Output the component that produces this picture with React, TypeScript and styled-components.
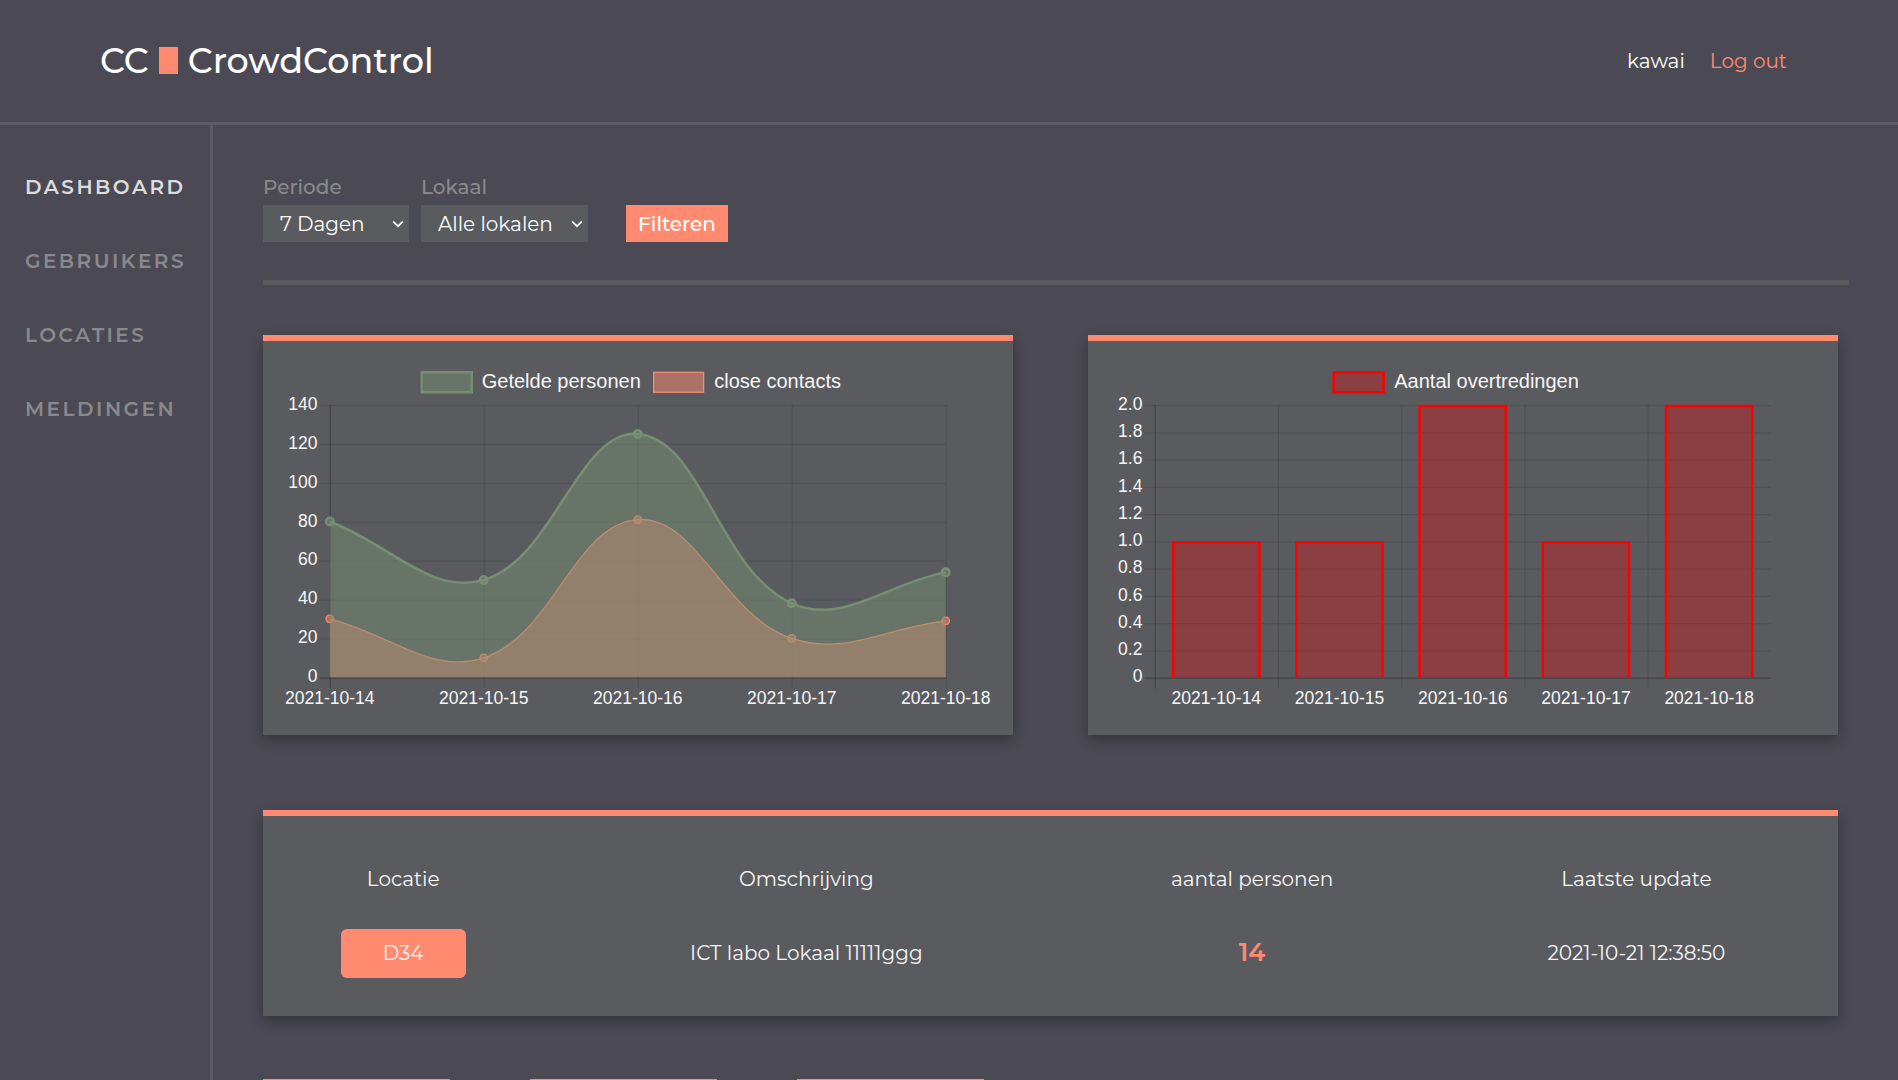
import React from "react";
import styled, { createGlobalStyle } from "styled-components";

const color = {
  page: "#4b4a54",
  panel: "#5a5b5f",
  line: "#5c5c66",
  accent: "#ff8a70",
  muted: "#89898d",
  text: "#ffffff",
};

const GlobalStyle = createGlobalStyle`
  *, *::before, *::after { box-sizing: border-box; }
  body {
    margin: 0;
    background: ${color.page};
    color: ${color.text};
    font: 400 20px/24px Montserrat, Inter, sans-serif;
  }
`;

const Shell = styled.div`
  display: flex;
  flex-direction: column;
  height: 100vh;
  overflow: hidden;
`;

const Header = styled.header`
  display: flex;
  align-items: center;
  justify-content: space-between;
  flex: none;
  height: 125px;
  padding: 0 111px 0 100px;
  border-bottom: 3px solid ${color.line};
`;

const Logo = styled.a`
  display: flex;
  align-items: center;
  gap: 10px;
  color: inherit;
  font-size: 35px;
  font-weight: 500;
  line-height: 44px;
  text-decoration: none;
`;

const LogoMark = styled.span`
  width: 19px;
  height: 27px;
  margin-bottom: 2px;
  background: ${color.accent};
`;

const Account = styled.div`
  display: flex;
  gap: 25px;
`;

const LogoutLink = styled.a`
  color: ${color.accent};
  text-decoration: none;
`;

const Body = styled.div`
  display: flex;
  flex: 1;
  min-height: 0;
`;

const Sidebar = styled.nav`
  display: flex;
  flex: none;
  flex-direction: column;
  gap: 50px;
  width: 213px;
  padding: 50px 25px;
  border-right: 3px solid ${color.line};
`;

const NavLink = styled.a<{ $active?: boolean }>`
  color: ${(p) => (p.$active ? "#dcdcdc" : color.muted)};
  font-weight: 600;
  letter-spacing: 0.125em;
  text-decoration: none;
  text-transform: uppercase;
`;

const Main = styled.main`
  flex: 1;
  min-width: 0;
  padding: 50px 49px 0 50px;
  overflow: hidden;
`;

const Filters = styled.form`
  display: flex;
  align-items: flex-end;
  gap: 12px;
  padding-bottom: 38px;
  border-bottom: 5px solid ${color.panel};
`;

const Field = styled.div<{ $width: number }>`
  display: flex;
  flex-direction: column;
  gap: 6px;
  width: ${(p) => p.$width}px;
`;

const FieldLabel = styled.label`
  color: ${color.muted};
  font-weight: 500;
`;

const SelectBox = styled.div`
  position: relative;
`;

const Select = styled.select`
  appearance: none;
  width: 100%;
  height: 37px;
  padding: 0 30px 0 17px;
  border: 0;
  border-radius: 0;
  background: ${color.panel};
  color: inherit;
  font: inherit;
`;

const Chevron = styled.svg`
  position: absolute;
  top: 15px;
  right: 5px;
  pointer-events: none;
`;

const FilterButton = styled.button`
  width: 102px;
  height: 37px;
  margin-left: 26px;
  padding: 0;
  border: 0;
  background: ${color.accent};
  color: inherit;
  font: inherit;
  font-weight: 500;
`;

const Panels = styled.div`
  display: grid;
  grid-template-columns: 1fr 1fr;
  gap: 75px;
  padding: 50px 11px 0 0;
`;

const Panel = styled.section<{ $wide?: boolean }>`
  grid-column: ${(p) => (p.$wide ? "1 / -1" : "auto")};
  padding: ${(p) => (p.$wide ? "26px 0" : "0 0 14px")};
  border-top: 6px solid ${color.accent};
  background: ${color.panel};
  box-shadow: 0 5px 12px rgba(0, 0, 0, 0.3);
`;

const Chart = styled.svg`
  display: block;
  width: 100%;
  height: auto;
  fill: #f6f6f6;
  font-family: "Liberation Sans", Arial, sans-serif;
  font-size: 14px;
`;

const LegendText = styled.text`
  font-size: 16px;
`;

const Table = styled.table`
  width: 100%;
  border-collapse: collapse;
  table-layout: fixed;
  color: #f6f6f6;
`;

const HeadCell = styled.th<{ $share: string }>`
  width: ${(p) => p.$share};
  height: 74px;
  padding: 0;
  font-weight: 400;
`;

const Cell = styled.td`
  height: 74px;
  padding: 0;
  text-align: center;
`;

const RoomButton = styled.button`
  width: 125px;
  height: 49px;
  border: 0;
  border-radius: 6px;
  background: ${color.accent};
  color: inherit;
  font: inherit;
`;

const Count = styled.strong`
  color: ${color.accent};
  font-size: 25px;
  font-weight: 600;
`;

const Tiles = styled.div`
  display: flex;
  gap: 80px;
  padding-top: 63px;
`;

const Tile = styled.div`
  width: 187px;
  height: 187px;
  border-top: 6px solid ${color.accent};
  background: ${color.panel};
`;

const DAYS = ["2021-10-14", "2021-10-15", "2021-10-16", "2021-10-17", "2021-10-18"];
const PEOPLE_TICKS = ["140", "120", "100", "80", "60", "40", "20", "0"];
const VIOLATION_TICKS = ["2.0", "1.8", "1.6", "1.4", "1.2", "1.0", "0.8", "0.6", "0.4", "0.2", "0"];
const TOP = 51;
const BASE = 269;
const LEFT = 53.4;
const RIGHT = 546.2;

type Point = [number, number];

/* Cardinal spline through the points, tension 0.4. */
function spline(points: Point[]): string {
  const tension = 0.4;
  const controls = points.map((cur, i) => {
    const prev = points[i - 1] ?? cur;
    const next = points[i + 1] ?? cur;
    const before = Math.hypot(cur[0] - prev[0], cur[1] - prev[1]);
    const after = Math.hypot(next[0] - cur[0], next[1] - cur[1]);
    const a = (tension * before) / (before + after);
    const b = (tension * after) / (before + after);
    const dx = next[0] - prev[0];
    const dy = next[1] - prev[1];
    return {
      inn: [cur[0] - a * dx, cur[1] - a * dy],
      out: [cur[0] + b * dx, cur[1] + b * dy],
    };
  });
  return points
    .map((p, i) =>
      i === 0 ? `M${p}` : `C${controls[i - 1].out} ${controls[i].inn} ${p}`,
    )
    .join(" ");
}

const gridStroke = (axis: boolean) => (axis ? "rgba(0,0,0,.25)" : "rgba(0,0,0,.1)");

function Grid({ step, ticks }: { step: number; ticks: string[] }) {
  const gap = (BASE - TOP) / (ticks.length - 1);
  return (
    <>
      {DAYS.map((day, i) => (
        <line
          key={day}
          x1={LEFT + step * i + 0.4}
          x2={LEFT + step * i + 0.4}
          y1={TOP}
          y2={BASE + 9}
          stroke={gridStroke(i === 0)}
        />
      ))}
      {ticks.map((tick, i) => {
        const y = TOP + gap * i;
        return (
          <g key={tick}>
            <line x1={LEFT - 8} x2={RIGHT} y1={y + 0.6} y2={y + 0.6} stroke={gridStroke(tick === "0")} />
            <text x={43.5} y={y + 4} textAnchor="end">
              {tick}
            </text>
          </g>
        );
      })}
    </>
  );
}

const SERIES = [
  { name: "close contacts", values: [30, 10, 81, 20, 29], rgb: "255,138,112", width: 1 },
  { name: "Getelde personen", values: [80, 50, 125, 38, 54], rgb: "119,142,114", width: 2 },
];

function PeopleChart() {
  const step = (RIGHT - LEFT) / 4;
  return (
    <Chart viewBox="0 0 600 304" role="img" aria-label="Getelde personen en close contacts">
      <rect x="127" y="25" width="40" height="16" fill="rgba(119,142,114,.5)" stroke="rgb(119,142,114)" strokeWidth="2" />
      <LegendText x="175" y="37.6">Getelde personen</LegendText>
      <rect x="312.5" y="25" width="40" height="16" fill="rgba(255,138,112,.5)" stroke="rgb(255,138,112)" />
      <LegendText x="361" y="37.6">close contacts</LegendText>
      <Grid step={step} ticks={PEOPLE_TICKS} />
      {SERIES.map((s) => {
        const points = s.values.map(
          (v, i): Point => [LEFT + step * i, BASE - (v / 140) * (BASE - TOP)],
        );
        const curve = spline(points);
        return (
          <g key={s.name}>
            <path d={`${curve} V${BASE} H${LEFT} Z`} fill={`rgba(${s.rgb},.5)`} />
            <path d={curve} fill="none" stroke={`rgb(${s.rgb})`} strokeWidth={s.width} />
            {points.map(([x, y]) => (
              <circle
                key={x}
                cx={x}
                cy={y}
                r="3"
                fill={`rgba(${s.rgb},.5)`}
                stroke={`rgb(${s.rgb})`}
                strokeWidth={s.width}
              />
            ))}
          </g>
        );
      })}
      {DAYS.map((d, i) => (
        <text key={d} x={LEFT + step * i} y="290.5" textAnchor="middle">{d}</text>
      ))}
    </Chart>
  );
}

function ViolationsChart() {
  const step = (RIGHT - LEFT) / 5;
  const values = [1, 1, 2, 1, 2];
  return (
    <Chart viewBox="0 0 600 304" role="img" aria-label="Aantal overtredingen per dag">
      <rect x="196.5" y="25" width="40" height="16" fill="rgba(255,0,0,.3)" stroke="#f00" strokeWidth="2" />
      <LegendText x="245" y="37.6">Aantal overtredingen</LegendText>
      <Grid step={step} ticks={VIOLATION_TICKS} />
      {values.map((v, i) => {
        const x = LEFT + step * (i + 0.5) - 34.5;
        const y = BASE - (v / 2) * (BASE - TOP) + 1;
        return (
          <path
            key={DAYS[i]}
            d={`M${x} ${BASE} V${y} h69 V${BASE}`}
            fill="rgba(255,0,0,.3)"
            stroke="#f00"
            strokeWidth="2"
          />
        );
      })}
      {DAYS.map((d, i) => (
        <text key={d} x={LEFT + step * (i + 0.5)} y="290.5" textAnchor="middle">{d}</text>
      ))}
    </Chart>
  );
}

function FilterField(props: { id: string; label: string; width: number; options: string[] }) {
  return (
    <Field $width={props.width}>
      <FieldLabel htmlFor={props.id}>{props.label}</FieldLabel>
      <SelectBox>
        <Select id={props.id}>
          {props.options.map((o) => (
            <option key={o}>{o}</option>
          ))}
        </Select>
        <Chevron width="12" height="8" viewBox="0 0 12 8" fill="none" stroke="#fff" strokeWidth="1.7">
          <path d="M1.2 1.5 6 6.2 10.8 1.5" />
        </Chevron>
      </SelectBox>
    </Field>
  );
}

export default function App() {
  return (
    <Shell>
      <GlobalStyle />
      <Header>
        <Logo href="#">
          <span>CC</span>
          <LogoMark />
          <span>CrowdControl</span>
        </Logo>
        <Account>
          <span>kawai</span>
          <LogoutLink href="#">Log out</LogoutLink>
        </Account>
      </Header>
      <Body>
        <Sidebar>
          <NavLink href="#" $active>Dashboard</NavLink>
          <NavLink href="#">Gebruikers</NavLink>
          <NavLink href="#">Locaties</NavLink>
          <NavLink href="#">Meldingen</NavLink>
        </Sidebar>
        <Main>
          <Filters>
            <FilterField id="periode" label="Periode" width={146} options={["7 Dagen"]} />
            <FilterField id="lokaal" label="Lokaal" width={167} options={["Alle lokalen"]} />
            <FilterButton type="button">Filteren</FilterButton>
          </Filters>
          <Panels>
            <Panel>
              <PeopleChart />
            </Panel>
            <Panel>
              <ViolationsChart />
            </Panel>
            <Panel $wide>
              <Table>
                <thead>
                  <tr>
                    <HeadCell $share="17.8%">Locatie</HeadCell>
                    <HeadCell $share="33.4%">Omschrijving</HeadCell>
                    <HeadCell $share="23.2%">aantal personen</HeadCell>
                    <HeadCell $share="25.6%">Laatste update</HeadCell>
                  </tr>
                </thead>
                <tbody>
                  <tr>
                    <Cell><RoomButton type="button">D34</RoomButton></Cell>
                    <Cell>ICT labo Lokaal 11111ggg</Cell>
                    <Cell><Count>14</Count></Cell>
                    <Cell>2021-10-21 12:38:50</Cell>
                  </tr>
                </tbody>
              </Table>
            </Panel>
          </Panels>
          <Tiles>
            <Tile />
            <Tile />
            <Tile />
          </Tiles>
        </Main>
      </Body>
    </Shell>
  );
}
